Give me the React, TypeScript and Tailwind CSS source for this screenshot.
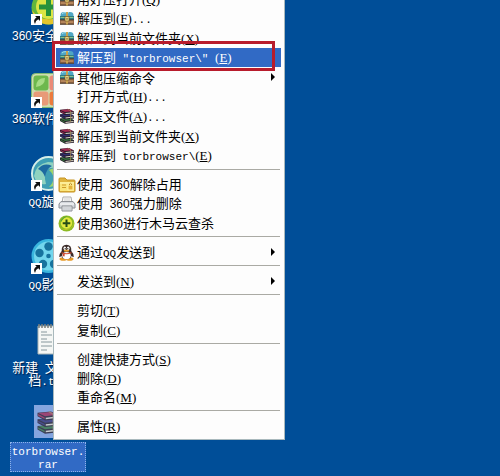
import React from "react";

const CJK = "font-['Noto_Sans_CJK_SC',sans-serif]";

/* Han characters take 13px cells, Latin runs use a half-width face. */
function Mixed({ text, hot }: { text: string; hot?: string }) {
  const runs = text.match(/[\x20-\x2f\x3a-\x7e]+|[0-9]+|[^\x20-\x7e]+/g) ?? [];
  return (
    <>
      {runs.map((run, i) => {
        if (run.charCodeAt(0) > 126) return <span key={i}>{run}</span>;
        if (/^[0-9]/.test(run))
          return (
            <span key={i} className="font-['Liberation_Sans',sans-serif] text-[12px]">
              {run}
            </span>
          );
        return (
          <span key={i} className="font-['Liberation_Mono',monospace] text-[11px]">
            {run}
          </span>
        );
      })}
      {hot && (
        <span className="font-['Liberation_Serif',serif] text-[13px]">
          (<u className="underline-offset-1">{hot}</u>)
        </span>
      )}
    </>
  );
}

const HaoZip = () => (
  <svg viewBox="0 0 14 14" className="h-3.5 w-3.5">
    <path d="M.5 4Q.5 1 4 1H10Q13.5 1 13.5 4V5H.5Z" fill="#4fa6c4" />
    <path d="M2 3Q3 1.7 5 1.7H9" stroke="#a5e0ec" fill="none" />
    <rect x="0" y="5" width="14" height="4" fill="#2f7d86" />
    <path d="M.5 6.5H13.5" stroke="#8cc08a" />
    <rect x="0" y="9" width="14" height="4.5" fill="#9a6a45" />
    <path d="M0 8.8H14M0 13.2H14" stroke="#4b3d30" />
    <path d="M1 11H13" stroke="#cda073" />
    <path d="M6 1H8V5H6ZM6 10H8V13.5H6Z" fill="#c8a24f" />
    <rect x="5" y="5.5" width="4" height="4.5" fill="#f6e48e" stroke="#7a5a26" strokeWidth=".7" />
    <path d="M7 6.8V8.8" stroke="#75501d" />
  </svg>
);

const Books = ({ className = "h-4 w-4" }: { className?: string }) => (
  <svg viewBox="0 0 16 16" className={className}>
    {[
      ["#36753d", 9.8],
      ["#343174", 5.4],
      ["#a32752", 1],
    ].map(([c, y]) => (
      <g key={c as string} transform={`translate(0 ${y})`}>
        <path d="M1 .8L10 0L15 2.4V5L6 6L1 3.2Z" fill="#241c28" />
        <path d="M1.5 1L10 .3L14.3 2.2L6 3.1Z" fill={c as string} />
        <path d="M6.5 4.1L14.5 3.2V4.2L6.5 5.1Z" fill="#ddd9c9" />
        <path d="M1.4 1.7L5.8 4V5L1.4 2.8Z" fill={c as string} />
      </g>
    ))}
    <path d="M8.5 1L11.5 3V14" stroke="#a88a55" strokeWidth="1" fill="none" opacity=".65" />
  </svg>
);

const Folder = () => (
  <svg viewBox="0 0 18 16" className="h-4 w-[18px]">
    <path d="M1 2Q1 1 2 1H7L9 3H16Q17 3 17 4V14Q17 15 16 15H2Q1 15 1 14Z" fill="#dfb33d" stroke="#c79425" />
    <path d="M2 5H16V14H2Z" fill="#fae57b" />
    <path d="M2 6H16" stroke="#fff6b8" />
    <path d="M4 8H8M4 10.5H8" stroke="#cf9b2c" />
    <rect x="10" y="8" width="5" height="5" fill="#e5b23a" stroke="#fff3a3" />
    <path d="M11.5 8V7Q12.5 5.5 13.5 7V8" stroke="#b98824" fill="none" />
  </svg>
);

const Shredder = () => (
  <svg viewBox="0 0 18 16" className="h-4 w-[18px]">
    <path d="M5 1H13L14 7H4Z" fill="#fafafa" stroke="#aaa" />
    <path d="M6 3H12M6 5H12" stroke="#ccc" />
    <path d="M3 5.5H15L17 8V12H1V8Z" fill="#d4d7dc" stroke="#8b8e94" />
    <path d="M2 8H16" stroke="#fff" />
    <path d="M4 10H14V15H4Z" fill="#eef0f2" stroke="#8d9095" />
    <path d="M6 11V15M8 11V15M10 11V15M12 11V15" stroke="#a6abb2" strokeWidth=".8" />
  </svg>
);

const Shield = ({ className = "h-[17px] w-[17px]" }: { className?: string }) => (
  <svg viewBox="0 0 17 17" className={className}>
    <circle cx="8.5" cy="8.5" r="8" fill="#8dbb24" />
    <path d="M2 12A8 8 0 0 0 16 6Q16 13 9 14Q4 15 2 12" fill="#dbc927" />
    <circle cx="8.5" cy="8" r="5.7" fill="#e1e83e" />
    <path d="M2.5 6Q5 1 10 1.2Q5 3 3.2 7Z" fill="#53a33a" />
    <path d="M8.5 4.5V12M4.7 8.2H12.3" stroke="#264d16" strokeWidth="2" />
  </svg>
);

const Penguin = () => (
  <svg viewBox="0 0 16 17" className="h-[17px] w-[17px]">
    <ellipse cx="4.8" cy="15" rx="3.8" ry="1.8" fill="#e79b28" />
    <ellipse cx="11.2" cy="15" rx="3.8" ry="1.8" fill="#e79b28" />
    <path d="M3.2 7Q2.8.8 8 .8T12.8 7Q15.6 10 15.3 13Q14 13 13 11.8Q13 15 8 15.2Q3 15 3 11.8Q2 13 .7 13Q.4 10 3.2 7Z" fill="#3a2a28" />
    <ellipse cx="8" cy="11.6" rx="4.3" ry="3.6" fill="#fff" />
    <ellipse cx="6.3" cy="4.3" rx="1.3" ry="1.8" fill="#fff" />
    <ellipse cx="9.7" cy="4.3" rx="1.3" ry="1.8" fill="#fff" />
    <circle cx="6.7" cy="4.5" r=".6" />
    <circle cx="9.3" cy="4.5" r=".6" />
    <ellipse cx="8" cy="6.8" rx="2.9" ry="1" fill="#eda633" />
    <path d="M3 8Q8 10.5 13 8L13 9.2Q8 11.4 3 9.2Z" fill="#cf4a31" />
    <path d="M4.3 9.5L6.3 10.2L6 12.4L4.2 12Z" fill="#cf4a31" />
  </svg>
);

type Item = { text: string; hot?: string; tail?: string; icon?: React.ReactNode; sub?: boolean; active?: boolean };

const groups: { height: string; items: Item[] }[] = [
  {
    height: "h-[177px] pb-px",
    items: [
      { text: "用好压打开", hot: "Q", icon: <HaoZip /> },
      { text: "解压到", hot: "F", tail: "...", icon: <HaoZip /> },
      { text: "解压到当前文件夹", hot: "X", icon: <HaoZip /> },
      { text: '解压到 "torbrowser\\" ', hot: "E", icon: <HaoZip />, active: true },
      { text: "其他压缩命令", icon: <HaoZip />, sub: true },
      { text: "打开方式", hot: "H", tail: "..." },
      { text: "解压文件", hot: "A", tail: "...", icon: <Books /> },
      { text: "解压到当前文件夹", hot: "X", icon: <Books /> },
      { text: "解压到 torbrowser\\", hot: "E", icon: <Books /> },
    ],
  },
  {
    height: "h-[58px]",
    items: [
      { text: "使用 360解除占用", icon: <Folder /> },
      { text: "使用 360强力删除", icon: <Shredder /> },
      { text: "使用360进行木马云查杀", icon: <Shield /> },
    ],
  },
  { height: "h-5", items: [{ text: "通过QQ发送到", icon: <Penguin />, sub: true }] },
  { height: "h-5", items: [{ text: "发送到", hot: "N", sub: true }] },
  {
    height: "h-10",
    items: [
      { text: "剪切", hot: "T" },
      { text: "复制", hot: "C" },
    ],
  },
  {
    height: "h-[58px]",
    items: [
      { text: "创建快捷方式", hot: "S" },
      { text: "删除", hot: "D" },
      { text: "重命名", hot: "M" },
    ],
  },
  { height: "h-5", items: [{ text: "属性", hot: "R" }] },
];

function Row({ item }: { item: Item }) {
  return (
    <button
      type="button"
      role="menuitem"
      className={`relative flex w-full flex-1 items-center text-left leading-none whitespace-pre ${
        item.active ? "bg-[#316ac5] text-white" : "text-black"
      }`}
    >
      <span className="flex w-[21px] shrink-0 items-center justify-center">{item.icon}</span>
      <span className="flex-1">
        <Mixed text={item.text} hot={item.hot} />
        {item.tail && <Mixed text={item.tail} />}
      </span>
      {item.sub && (
        <svg viewBox="0 0 4 8" className="mr-1.5 h-2 w-1">
          <path d="M0 0L4 4L0 8Z" />
        </svg>
      )}
      {item.active && (
        <span className="pointer-events-none absolute -top-[7px] right-1.5 -bottom-1 -left-1 border-3 border-[#b81c2c]" />
      )}
    </button>
  );
}

const Arrow = () => (
  <g>
    <rect x="0" y="24" width="11" height="11" fill="#fff" />
    <path d="M4 26H9V31L7.3 29.3Q4.5 30.5 4 34Q1.5 30 5.6 27.6Z" fill="#111" />
  </g>
);

const SafeIcon = () => (
  <svg viewBox="0 0 35 35" className="h-[35px] w-[35px]">
    <circle cx="17.5" cy="17.5" r="17" fill="#62b63c" />
    <path d="M1 20Q8 31 22 29Q32 27 34 14Q36 33 18 34.5Q4 34 1 20" fill="#e3c52c" />
    <circle cx="17.5" cy="16.5" r="12.5" fill="#dce545" />
    <path d="M17.5 7V26M8 17H27" stroke="#27923b" strokeWidth="5" />
    <Arrow />
  </svg>
);

const SoftIcon = () => (
  <svg viewBox="0 0 35 35" className="h-[35px] w-[35px]">
    <rect x=".5" y=".5" width="34" height="34" rx="4" fill="#cfdcae" stroke="#7fb873" />
    <rect x="2.5" y="2.5" width="15" height="15" rx="3" fill="#6db84d" />
    <rect x="18.5" y="2.5" width="14" height="15" rx="3" fill="#ea8a78" />
    <rect x="2.5" y="18.5" width="15" height="14" rx="3" fill="#e89a78" />
    <rect x="18.5" y="18.5" width="14" height="14" rx="3" fill="#ec7a3c" />
    <path d="M5 14Q5 5 14 5Q14 13 5 14" fill="#a6dc84" />
    <Arrow />
  </svg>
);

const WindIcon = () => (
  <svg viewBox="0 0 35 35" className="h-[35px] w-[35px]">
    <circle cx="17.5" cy="17.5" r="16.5" fill="#3f9fb4" stroke="#d5eee8" strokeWidth="2" />
    <path d="M3 20Q5 8 17 6Q31 6 31 18Q26 9 17 13Q12 16 15 28Q6 30 3 20" fill="#8fd3c0" />
    <path d="M18 14Q26 9 31 18Q31 30 18 31Q27 22 18 14" fill="#9ed46b" />
    <path d="M7 13Q13 6 21 10Q15 13 14 21Q12 15 7 13" fill="#1d6aa0" />
    <Arrow />
  </svg>
);

const FilmIcon = () => (
  <svg viewBox="0 0 35 35" className="h-[35px] w-[35px]">
    <circle cx="17.5" cy="17" r="17" fill="#38b5de" />
    <circle cx="17.5" cy="17" r="14.5" fill="#72d6ed" />
    {[
      [17.5, 7.5],
      [26.5, 14],
      [23, 25],
      [12, 25],
      [8.5, 14],
    ].map(([x, y]) => (
      <circle key={x} cx={x} cy={y} r="4.2" fill="#17739e" />
    ))}
    <circle cx="17.5" cy="17" r="2.3" fill="#17739e" />
    <Arrow />
  </svg>
);

const NoteIcon = () => (
  <svg viewBox="0 0 35 35" className="h-[35px] w-[35px]">
    <path d="M7 4H31V32H7Z" fill="#f5f7f5" stroke="#a9b4b5" />
    <path d="M8 2V6M11 2V6M14 2V6M17 2V6M20 2V6M23 2V6M26 2V6M29 2V6" stroke="#777c79" strokeWidth="1.5" />
    <path d="M10 10H16M10 13H21M10 17H16M10 20H21M10 24H21M10 28H16" stroke="#86979c" />
  </svg>
);

const RarIcon = () => (
  <span className="flex h-[33px] w-[29px] items-center justify-center bg-[#84a5df]">
    <Books className="h-6 w-6 opacity-75" />
  </span>
);

const shortcuts = [
  { icon: <SafeIcon />, lines: ["360安全卫士"] },
  { icon: <SoftIcon />, lines: ["360软件管家"] },
  { icon: <WindIcon />, lines: ["QQ旋风"] },
  { icon: <FilmIcon />, lines: ["QQ影音"] },
  { icon: <NoteIcon />, lines: ["新建 文本文", "档.txt"] },
  { icon: <RarIcon />, lines: ["torbrowser.", "rar"], selected: true },
];

export default function App() {
  return (
    <main className={`relative h-screen overflow-hidden bg-[#004e98] text-[13px] ${CJK}`}>
      <div className="-mt-2.5 flex w-24 flex-col">
        {shortcuts.map((s) => (
          <button
            key={s.lines[0]}
            type="button"
            className={`flex h-[83px] shrink-0 flex-col items-center text-white ${s.selected ? "gap-1" : "gap-0.5"}`}
          >
            {s.icon}
            <span
              className={`flex w-[76px] flex-col items-center leading-[13px] whitespace-pre ${
                s.selected
                  ? "border border-dotted border-[#8db3ea] bg-[#316ac5] pb-0.5"
                  : "py-px text-shadow-[1px_1px_1px_#001a40]"
              }`}
            >
              {s.lines.map((line) => (
                <span key={line} className="h-[13px]">
                  <Mixed text={line} />
                </span>
              ))}
            </span>
          </button>
        ))}
      </div>

      <div
        role="menu"
        className="absolute -top-3 left-[53px] w-[232px] border border-[#a9b9bd] bg-[#fdfdfd] pr-[3px] pb-[3px] pl-0.5"
      >
        {groups.map((g, i) => (
          <React.Fragment key={i}>
            {i > 0 && <hr className="mt-[3px] mb-[5px] mr-px ml-px border-t border-[#aaaaa4]" />}
            <div className={`flex flex-col ${g.height}`}>
              {g.items.map((item) => (
                <Row key={item.text} item={item} />
              ))}
            </div>
          </React.Fragment>
        ))}
      </div>
    </main>
  );
}
